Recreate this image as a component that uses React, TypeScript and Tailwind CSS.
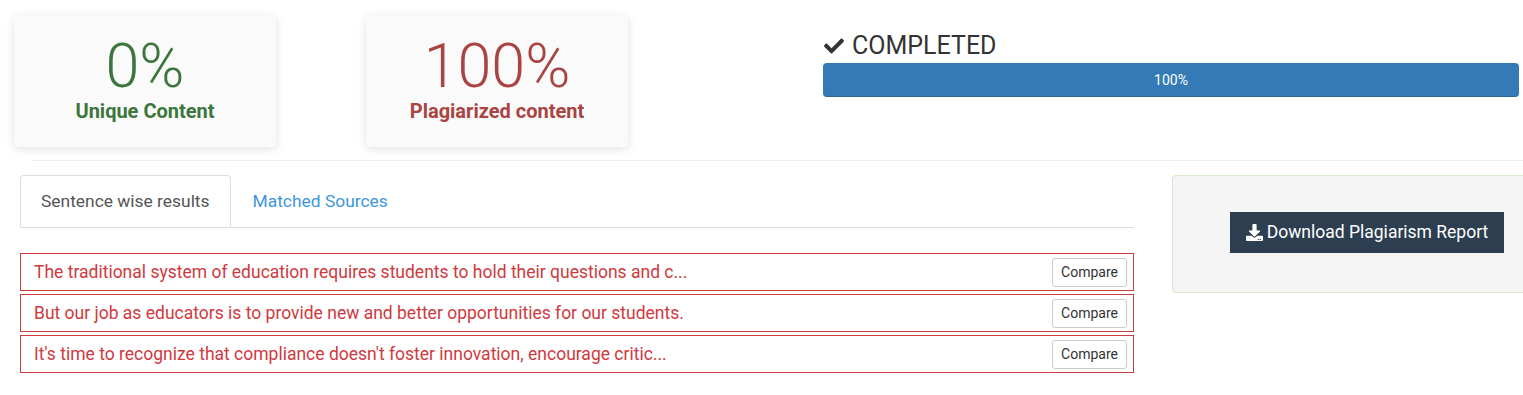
import { FaDownload } from "react-icons/fa";

const rows = [
  "The traditional system of education requires students to hold their questions and c...",
  "But our job as educators is to provide new and better opportunities for our students.",
  "It's time to recognize that compliance doesn't foster innovation, encourage critic...",
];

function StatCard({ value, label, color }: { value: string; label: string; color: string }) {
  return (
    <div className="flex h-[132px] w-[262px] flex-col items-center rounded-[4px] bg-[#fafafa] pt-[21px] shadow-[0_2px_10px_rgba(0,0,0,0.12)]">
      <div className={`text-[61px] font-light leading-[60px] ${color}`}>{value}</div>
      <div className={`mt-[4px] text-[20px] font-bold leading-[22px] ${color}`}>{label}</div>
    </div>
  );
}

export default function App() {
  return (
    <div className="w-[1523px] h-[395px] overflow-hidden bg-white font-['Roboto','Liberation_Sans',sans-serif] text-[#333]">
      {/* top summary */}
      <div className="flex pl-[14px] pt-[15px]">
        <div className="flex gap-[90px]">
          <StatCard value="0%" label="Unique Content" color="text-[#3c763d]" />
          <StatCard value="100%" label="Plagiarized content" color="text-[#a94442]" />
        </div>
        <div className="ml-[195px] w-[696px] pt-[16px]">
          <div className="flex items-center gap-[7px] text-[25px] leading-[30px] text-[#333]">
            <svg viewBox="0 0 512 512" className="h-[20px] w-[22px] fill-[#333]">
              <path d="M173.898 439.404l-166.4-166.4c-9.997-9.997-9.997-26.206 0-36.204l36.203-36.204c9.997-9.998 26.207-9.998 36.204 0L192 312.69 432.095 72.596c9.997-9.997 26.207-9.997 36.204 0l36.203 36.204c9.997 9.997 9.997 26.206 0 36.204l-294.4 294.401c-9.998 9.997-26.207 9.997-36.204-.001z" />
            </svg>
            <span>COMPLETED</span>
          </div>
          <div className="mt-[2px] flex h-[34px] items-center justify-center rounded-[4px] bg-[#337ab7] text-[14px] text-white shadow-[inset_0_-1px_0_rgba(0,0,0,0.15)]">
            100%
          </div>
        </div>
      </div>

      <div className="ml-[32px] mt-[13px] border-t border-[#eee]" />

      {/* results */}
      <div className="flex pt-[14px]">
        <div className="ml-[20px] w-[1114px] shrink-0">
          <div className="flex border-b border-[#ddd] text-[17.4px]">
            <div className="-mb-px flex h-[52px] items-center rounded-t-[4px] border border-[#ddd] border-b-white bg-white px-[20px] text-[#555]">
              Sentence wise results
            </div>
            <div className="flex h-[52px] items-center px-[22px] text-[#3c97dd]">Matched Sources</div>
          </div>
          <div className="mt-[25px] flex flex-col gap-[3px]">
            {rows.map((r) => (
              <div key={r} className="flex h-[38px] items-center justify-between border border-[#cc3a3e] pl-[13px] pr-[6px]">
                <span className="text-[17.5px] text-[#d0393e]">{r}</span>
                <button className="h-[29px] rounded-[3px] border border-[#ccc] bg-white px-[8px] text-[14px] text-[#333]">
                  Compare
                </button>
              </div>
            ))}
          </div>
        </div>

        <div className="ml-[38px] h-[118px] w-[380px] shrink-0 rounded-[4px] border border-[#d6e9c6] bg-[#f5f5f5] pl-[57px] pt-[36px]">
          <button className="flex h-[41px] w-[274px] items-center justify-center gap-[4px] bg-[#2c3e50] text-[17.5px] text-white">
            <FaDownload className="h-[17px] w-[17px]" />
            <span>Download Plagiarism Report</span>
          </button>
        </div>
      </div>
    </div>
  );
}
